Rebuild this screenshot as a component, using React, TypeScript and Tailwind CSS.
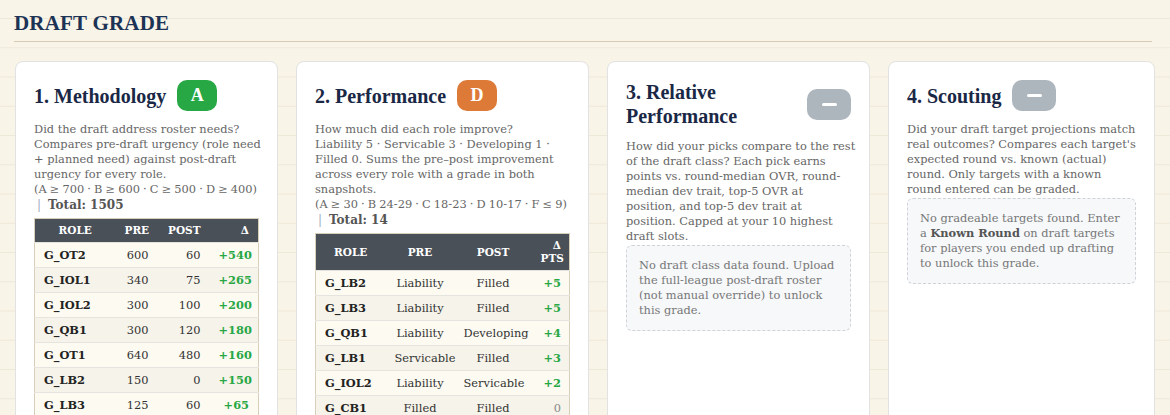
import type { ReactNode } from "react";

type Tone = "green" | "orange" | "none";

const METHOD_ROWS = [
  { role: "G_OT2", pre: 600, post: 60, delta: 540 },
  { role: "G_IOL1", pre: 340, post: 75, delta: 265 },
  { role: "G_IOL2", pre: 300, post: 100, delta: 200 },
  { role: "G_QB1", pre: 300, post: 120, delta: 180 },
  { role: "G_OT1", pre: 640, post: 480, delta: 160 },
  { role: "G_LB2", pre: 150, post: 0, delta: 150 },
  { role: "G_LB3", pre: 125, post: 60, delta: 65 },
  { role: "G_CB1", pre: 90, post: 60, delta: 30 },
];

const PERF_ROWS = [
  { role: "G_LB2", pre: "Liability", post: "Filled", pts: 5 },
  { role: "G_LB3", pre: "Liability", post: "Filled", pts: 5 },
  { role: "G_QB1", pre: "Liability", post: "Developing", pts: 4 },
  { role: "G_LB1", pre: "Servicable", post: "Filled", pts: 3 },
  { role: "G_IOL2", pre: "Liability", post: "Servicable", pts: 2 },
  { role: "G_CB1", pre: "Filled", post: "Filled", pts: 0 },
  { role: "G_OT1", pre: "Filled", post: "Filled", pts: 0 },
];

function Badge({ grade, tone }: { grade?: string; tone: Tone }) {
  if (tone === "none") {
    return (
      <span className="flex h-[31px] w-[44px] shrink-0 items-center justify-center rounded-[10px] bg-[#adb5bd]">
        <span className="h-[3px] w-[15px] rounded-sm bg-white" />
      </span>
    );
  }
  return (
    <span
      className={`flex h-[31px] min-w-[40px] shrink-0 items-center justify-center rounded-[10px] px-[13px] font-['Liberation_Serif',serif] text-[18px] font-bold text-white ${
        tone === "green" ? "bg-[#28a745]" : "bg-[#dd7a37]"
      }`}
    >
      {grade}
    </span>
  );
}

function Card({
  title,
  grade,
  tone,
  children,
}: {
  title: string;
  grade?: string;
  tone: Tone;
  children: ReactNode;
}) {
  return (
    <section className="min-h-[380px] rounded-lg border border-[#e2e2e2] bg-white p-[18px]">
      <div className="mb-[11px] flex items-center gap-[11px]">
        <h3 className="font-['Liberation_Serif',serif] text-[20px] leading-[24px] font-bold text-[#1a2846]">
          {title}
        </h3>
        <Badge grade={grade} tone={tone} />
      </div>
      {children}
    </section>
  );
}

// description text keeps the reference's line breaks
function Lines({ lines }: { lines: ReactNode[] }) {
  return (
    <p>
      {lines.map((l, i) => (
        <span key={i} className="block whitespace-nowrap">
          {l}
        </span>
      ))}
    </p>
  );
}

function Legend({ children }: { children: ReactNode }) {
  return <span className="block whitespace-nowrap [word-spacing:-0.5px]">{children}</span>;
}

function Total({ value }: { value: number }) {
  return (
    <div className="pl-[3px] text-[12px] leading-[16px]">
      <span className="text-[#9fb0c2]">|</span>
      <b className="ml-[7px] text-[#555]">Total: {value}</b>
    </div>
  );
}

function Empty({ lines }: { lines: ReactNode[] }) {
  return (
    <div className="mt-[1px] rounded-md border border-dashed border-[#cfd3d8] bg-[#f6f8fa] p-[12px] text-[#777]">
      <Lines lines={lines} />
    </div>
  );
}

const th = "bg-[#495057] px-[9px] py-[5px] text-[10.5px] leading-[13px] font-bold text-white uppercase";
const td = "border-t border-[#e6e4de] px-[9px] py-[4px] leading-[16px]";

export default function App() {
  return (
    <div className="min-h-[415px] bg-[#f8f4e8] bg-[linear-gradient(to_bottom,#eee8d8_1px,transparent_1px)] bg-[length:100%_29.25px] bg-[position:0_18px] pr-[18px] pl-[14px] font-['DejaVu_Serif',Georgia,serif] text-[11.4px] leading-[15px] text-[#666]">
      <h2 className="border-b border-[#d6cbb2] pt-[11px] pb-[6px] font-['Liberation_Serif',serif] text-[21px] leading-[24px] font-bold tracking-[0.2px] text-[#1c3356]">
        DRAFT GRADE
      </h2>

      <div className="mt-[19px] ml-px grid grid-cols-[263px_293px_263px_1fr] gap-[18px]">
        <Card title="1. Methodology" grade="A" tone="green">
          <Lines
            lines={[
              "Did the draft address roster needs?",
              "Compares pre-draft urgency (role need",
              "+ planned need) against post-draft",
              "urgency for every role.",
            ]}
          />
          <Legend>(A ≥ 700 · B ≥ 600 · C ≥ 500 · D ≥ 400)</Legend>
          <Total value={1505} />
          <table className="mt-[5px] w-full table-fixed border-collapse border border-[#d8cfbb]">
            <thead>
              <tr>
                <th className={`${th} w-[81px] text-center`}>Role</th>
                <th className={`${th} w-[42px] text-right`}>Pre</th>
                <th className={`${th} w-[52px] text-right`}>Post</th>
                <th className={`${th} text-right`}>Δ</th>
              </tr>
            </thead>
            <tbody>
              {METHOD_ROWS.map((r, i) => (
                <tr key={r.role} className={i % 2 ? "bg-[#f6f3ea]" : "bg-[#fcfaf1]"}>
                  <td className={`${td} font-bold text-[#222]`}>{r.role}</td>
                  <td className={`${td} text-right text-[#333]`}>{r.pre}</td>
                  <td className={`${td} text-right text-[#333]`}>{r.post}</td>
                  <td className={`${td} text-right font-bold text-[#28a745]`}>+{r.delta}</td>
                </tr>
              ))}
            </tbody>
          </table>
        </Card>

        <Card title="2. Performance" grade="D" tone="orange">
          <Lines
            lines={[
              "How much did each role improve?",
              "Liability 5 · Servicable 3 · Developing 1 ·",
              "Filled 0. Sums the pre–post improvement",
              "across every role with a grade in both",
              "snapshots.",
            ]}
          />
          <Legend>(A ≥ 30 · B 24-29 · C 18-23 · D 10-17 · F ≤ 9)</Legend>
          <Total value={14} />
          <table className="mt-[5px] w-full table-fixed border-collapse border border-[#d8cfbb]">
            <thead>
              <tr>
                <th className={`${th} w-[70px] text-center`}>Role</th>
                <th className={`${th} w-[69px] text-center`}>Pre</th>
                <th className={`${th} w-[77px] text-center`}>Post</th>
                <th className={`${th} pr-[8px] text-right`}>
                  Δ<br />
                  Pts
                </th>
              </tr>
            </thead>
            <tbody>
              {PERF_ROWS.map((r, i) => (
                <tr key={r.role} className={i % 2 ? "bg-[#f6f3ea]" : "bg-[#fcfaf1]"}>
                  <td className={`${td} font-bold text-[#222]`}>{r.role}</td>
                  <td className={`${td} px-0 text-center text-[#333]`}>{r.pre}</td>
                  <td className={`${td} px-0 text-center text-[#333]`}>{r.post}</td>
                  <td
                    className={`${td} pr-[8px] text-right ${
                      r.pts > 0 ? "font-bold text-[#28a745]" : "text-[#888]"
                    }`}
                  >
                    {r.pts > 0 ? `+${r.pts}` : r.pts}
                  </td>
                </tr>
              ))}
            </tbody>
          </table>
        </Card>

        <Card title="3. Relative Performance" tone="none">
          <Lines
            lines={[
              "How did your picks compare to the rest",
              "of the draft class? Each pick earns",
              "points vs. round-median OVR, round-",
              "median dev trait, top-5 OVR at",
              "position, and top-5 dev trait at",
              "position. Capped at your 10 highest",
              "draft slots.",
            ]}
          />
          <Empty
            lines={[
              "No draft class data found. Upload",
              "the full-league post-draft roster",
              "(not manual override) to unlock",
              "this grade.",
            ]}
          />
        </Card>

        <Card title="4. Scouting" tone="none">
          <Lines
            lines={[
              "Did your draft target projections match",
              "real outcomes? Compares each target's",
              "expected round vs. known (actual)",
              "round. Only targets with a known",
              "round entered can be graded.",
            ]}
          />
          <Empty
            lines={[
              "No gradeable targets found. Enter",
              <>
                a <b className="text-[#555]">Known Round</b> on draft targets
              </>,
              "for players you ended up drafting",
              "to unlock this grade.",
            ]}
          />
        </Card>
      </div>
    </div>
  );
}
